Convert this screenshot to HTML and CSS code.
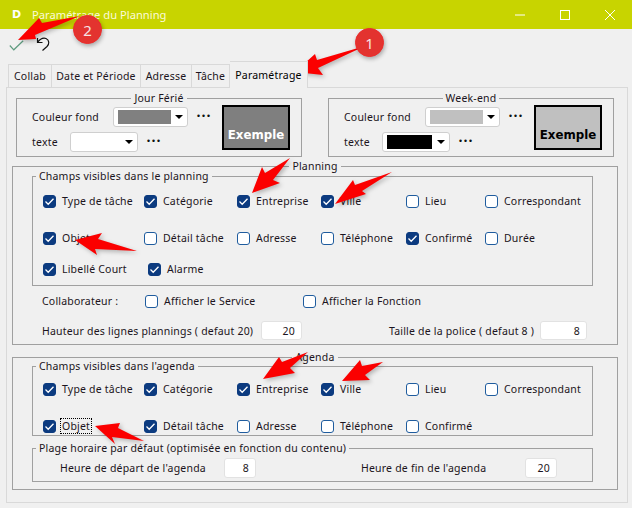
FILE: index.html
```html
<!DOCTYPE html>
<html lang="fr">
<head>
<meta charset="utf-8">
<title>Paramétrage du Planning</title>
<link rel="stylesheet" href="styles.css">
</head>
<body>
<div class="window">
  <header class="titlebar">
    <span class="app-logo">D</span>
    <span class="app-title">Paramétrage du Planning</span>
    <div class="win-controls">
      <span class="win-btn"><svg width="10" height="10" viewBox="0 0 10 10"><path d="M0 5h10" stroke="#fff" stroke-width="1"/></svg></span>
      <span class="win-btn"><svg width="10" height="10" viewBox="0 0 10 10"><rect x=".5" y=".5" width="9" height="9" fill="none" stroke="#fff"/></svg></span>
      <span class="win-btn"><svg width="10" height="10" viewBox="0 0 10 10"><path d="M0 0l10 10M10 0L0 10" stroke="#fff" stroke-width="1"/></svg></span>
    </div>
  </header>

  <div class="toolbar">
    <svg class="tool-check" width="15" height="11" viewBox="0 0 15 11"><path d="M.8 5.500l4 4.300L14.200.8" fill="none" stroke="#5f9c80" stroke-width="1.200"/></svg>
    <svg class="tool-undo" width="14" height="17" viewBox="0 0 14 17"><path d="M1.500 3v4.500h5M1.500 7.500C4 4 7 2.500 10 3.500c3.500 1.500 3.500 5.500 1 8L6.500 15.500" fill="none" stroke="#111" stroke-width="1.200"/></svg>
  </div>

  <nav class="tabs">
    <span class="tab tab-collab">Collab</span>
    <span class="tab tab-date">Date et Période</span>
    <span class="tab tab-adresse">Adresse</span>
    <span class="tab tab-tache">Tâche</span>
    <span class="tab tab-active">Paramétrage</span>
  </nav>

  <main class="panel">
    <div class="colors">
      <fieldset class="group color-group">
        <legend class="legend-center">Jour Férié</legend>
        <div class="color-body">
          <div class="color-form">
            <div class="color-row">
              <span class="lbl-fond">Couleur fond</span>
              <span class="select select-fond"><span class="swatch swatch-dark"></span><span class="caret"></span></span>
              <span class="dots">•••</span>
            </div>
            <div class="color-row">
              <span class="lbl-texte">texte</span>
              <span class="select select-texte"><span class="swatch swatch-white"></span><span class="caret"></span></span>
              <span class="dots">•••</span>
            </div>
          </div>
          <div class="sample sample-dark">Exemple</div>
        </div>
      </fieldset>
      <fieldset class="group color-group">
        <legend class="legend-center">Week-end</legend>
        <div class="color-body">
          <div class="color-form">
            <div class="color-row">
              <span class="lbl-fond">Couleur fond</span>
              <span class="select select-fond"><span class="swatch swatch-light"></span><span class="caret"></span></span>
              <span class="dots">•••</span>
            </div>
            <div class="color-row">
              <span class="lbl-texte">texte</span>
              <span class="select select-texte"><span class="swatch swatch-black"></span><span class="caret"></span></span>
              <span class="dots">•••</span>
            </div>
          </div>
          <div class="sample sample-light">Exemple</div>
        </div>
      </fieldset>
    </div>

    <fieldset class="group section section-planning">
      <legend class="legend-center legend-overlap">Planning</legend>
      <fieldset class="group fields">
        <legend class="legend-left">Champs visibles dans le planning</legend>
        <div class="check-grid check-grid-planning">
          <label class="check"><input type="checkbox" checked>Type de tâche</label>
          <label class="check"><input type="checkbox" checked>Catégorie</label>
          <label class="check"><input type="checkbox" checked>Entreprise</label>
          <label class="check"><input type="checkbox" checked>Ville</label>
          <label class="check"><input type="checkbox">Lieu</label>
          <label class="check"><input type="checkbox">Correspondant</label>
          <label class="check"><input type="checkbox" checked>Objet</label>
          <label class="check"><input type="checkbox">Détail tâche</label>
          <label class="check"><input type="checkbox">Adresse</label>
          <label class="check"><input type="checkbox">Téléphone</label>
          <label class="check"><input type="checkbox" checked>Confirmé</label>
          <label class="check"><input type="checkbox">Durée</label>
          <label class="check"><input type="checkbox" checked>Libellé Court</label>
          <label class="check check-shifted"><input type="checkbox" checked>Alarme</label>
        </div>
      </fieldset>
      <div class="collab-row">
        <span class="collab-label">Collaborateur :</span>
        <label class="check collab-service"><input type="checkbox">Afficher le Service</label>
        <label class="check"><input type="checkbox">Afficher la Fonction</label>
      </div>
      <div class="num-row">
        <span class="lbl-hauteur">Hauteur des lignes plannings ( defaut 20)</span>
        <input class="num num-hauteur" type="text" value="20">
        <span class="lbl-taille">Taille de la police ( defaut 8 )</span>
        <input class="num num-taille" type="text" value="8">
      </div>
    </fieldset>

    <fieldset class="group section section-agenda">
      <legend class="legend-center legend-overlap">Agenda</legend>
      <fieldset class="group fields fields-agenda">
        <legend class="legend-left">Champs visibles dans l'agenda</legend>
        <div class="check-grid check-grid-agenda">
          <label class="check"><input type="checkbox" checked>Type de tâche</label>
          <label class="check"><input type="checkbox" checked>Catégorie</label>
          <label class="check"><input type="checkbox" checked>Entreprise</label>
          <label class="check"><input type="checkbox" checked>Ville</label>
          <label class="check"><input type="checkbox">Lieu</label>
          <label class="check"><input type="checkbox">Correspondant</label>
          <label class="check"><input type="checkbox" checked><span class="focused">Objet</span></label>
          <label class="check"><input type="checkbox" checked>Détail tâche</label>
          <label class="check"><input type="checkbox">Adresse</label>
          <label class="check"><input type="checkbox">Téléphone</label>
          <label class="check"><input type="checkbox">Confirmé</label>
        </div>
      </fieldset>
      <fieldset class="group hours">
        <legend class="legend-left">Plage horaire par défaut (optimisée en fonction du contenu)</legend>
        <div class="hours-row">
          <span class="lbl-hour">Heure de départ de l'agenda</span>
          <input class="num num-hour" type="text" value="8">
          <span class="lbl-hour lbl-hour-end">Heure de fin de l'agenda</span>
          <input class="num num-hour" type="text" value="20">
        </div>
      </fieldset>
    </fieldset>
  </main>
</div>

<svg class="arrows" width="632" height="508" viewBox="0 0 632 508">
  <polygon points="80,16 42,23 39,18 18,40 36,39 35,35"/>
  <polygon points="365,46 317,60 315,54 295,72 323,75 318,68"/>
  <polygon points="290,158 265,173 262,167 252,193 280,183 273,180"/>
  <polygon points="392,172 355,185 353,180 335,204 366,194 362,191"/>
  <polygon points="137,251 98,239 102,233 75,240 97,255 95,249"/>
  <polygon points="308,352 282,362 279,357 263,379 295,373 290,368"/>
  <polygon points="383,362 362,366 360,360 342,381 370,380 365,375"/>
  <polygon points="144,441 118,428 120,423 95,426 115,444 112,437"/>
</svg>
<div class="badge badge-one">1</div>
<div class="badge badge-two">2</div>
</body>
</html>
```

FILE: styles.css
```css
* { box-sizing: border-box; }
html, body { margin: 0; padding: 0; height: 100%; overflow: hidden; }
body {
  position: relative;
  background: #f0f0f0;
  color: #1b1420;
  font: 10.5px/14px "Noto Sans", sans-serif;
  letter-spacing: .2px;
}
.window { width: 632px; height: 508px; }

.titlebar {
  display: flex;
  align-items: center;
  height: 29px;
  background: #c8d400;
  color: #fff;
  letter-spacing: 0;
}
.app-logo { width: 32px; padding-left: 12px; font: bold 11px "DejaVu Sans", sans-serif; }
.app-title { font: 11.200px "Noto Sans", sans-serif; color: #fbfbd8; }
.win-controls { display: flex; margin-left: auto; }
.win-btn { display: flex; align-items: center; justify-content: center; width: 45px; height: 29px; }

.toolbar { display: flex; height: 32px; padding-left: 9px; align-items: flex-start; }
.tool-check { margin-top: 11px; }
.tool-undo { margin: 6px 0 0 12px; }

.tabs { display: flex; align-items: flex-end; height: 26px; padding-left: 8px; position: relative; z-index: 1; }
.tab {
  display: flex;
  align-items: center;
  justify-content: center;
  height: 23px;
  border: 1px solid #d9d9d9;
  border-bottom: 0;
  border-left-width: 0;
  background: #f0f0f0;
}
.tab-collab { width: 44px; border-left-width: 1px; }
.tab-date { width: 89px; }
.tab-adresse { width: 51px; }
.tab-tache { width: 38px; }
.tab-active {
  width: 78px;
  height: 27px;
  margin-bottom: -1px;
  color: #000;
  border-left-width: 0;
}

.panel {
  width: 622px;
  height: 416px;
  margin-left: 6px;
  padding: 3px 9px 0 5px;
  border: 1px solid #d9d9d9;
}

.group { margin: 0; padding: 0; min-width: 0; border: 1px solid #a0a0a0; }
.legend-center { margin: 0 auto; padding: 0 3px; line-height: 14px; }
.legend-left { margin-left: 3px; padding: 0 3px; line-height: 14px; }
.legend-overlap { margin-bottom: -6px; }

.colors { display: flex; gap: 26px; margin-left: 4px; }
.color-group { width: 286px; }
.color-body { display: flex; padding: 2px 0 4px 15px; }
.color-form { display: flex; flex-direction: column; gap: 5px; }
.color-row { display: flex; align-items: center; height: 20px; }
.lbl-fond { width: 81px; }
.lbl-texte { width: 38px; }
.select {
  display: flex;
  align-items: center;
  height: 20px;
  padding-left: 4px;
  background: #fff;
  border: 1px solid #cfcfcf;
  border-radius: 3px;
}
.select-fond { width: 75px; }
.select-texte { width: 68px; }
.swatch { display: block; height: 14px; }
.select-fond .swatch { width: 53px; }
.select-texte .swatch { width: 45px; }
.swatch-dark { background: #808080; }
.swatch-light { background: #c0c0c0; }
.swatch-white { background: #fff; }
.swatch-black { background: #000; }
.caret {
  margin-left: 4px;
  border-left: 4px solid transparent;
  border-right: 4px solid transparent;
  border-top: 4px solid #000;
}
.select-texte .caret { margin-left: 5px; }
.dots { margin: -3px 0 0 8px; font: 8.500px/14px "DejaVu Sans", sans-serif; letter-spacing: 0; color: #111; }
.sample {
  display: flex;
  align-items: flex-end;
  justify-content: center;
  width: 68px;
  height: 45px;
  margin: -2px 11px 0 auto;
  padding-bottom: 5px;
  border: 2px solid #000;
  font: bold 11.800px/16px "DejaVu Sans", sans-serif;
  letter-spacing: 0;
}
.sample-dark { background: #7f7f7f; color: #fff; }
.sample-light { background: #c0c0c0; color: #000; }

.section { width: 606px; padding: 0 0 4px; }
.section > :not(legend) { margin-left: 19px; margin-right: 24px; }
.section-planning { margin-top: 2px; }
.section-agenda { margin-top: 5px; padding-bottom: 7px; }
.fields { margin-top: 2px; }
.fields-agenda { margin-top: 1px; }

.check-grid {
  display: grid;
  grid-template-columns: 101px 93px 84px 85px 79px auto;
  align-items: start;
  padding-left: 10px;
}
.check-grid-planning { grid-template-rows: 37px 31px 14px; padding-top: 11px; padding-bottom: 9px; }
.check-grid-agenda { grid-template-rows: 37px 14px; padding-top: 9px; padding-bottom: 2px; }

.check { display: flex; align-items: center; height: 14px; white-space: nowrap; }
.check input {
  appearance: none;
  flex: none;
  width: 13px;
  height: 13px;
  margin: 0 6px 0 0;
  background: #fff;
  border: 1.500px solid #1f5c9e;
  border-radius: 3px;
}
.check input:checked {
  border-color: #0c3b80;
  background: #0c3b80 url("data:image/svg+xml,%3Csvg xmlns='http://www.w3.org/2000/svg' viewBox='0 0 13 13'%3E%3Cpath d='M2.500 6.500l2.700 2.700 5.300-5.500' fill='none' stroke='white' stroke-width='1.300'/%3E%3C/svg%3E") center / 13px 13px no-repeat;
}
.check-shifted { margin-left: 4px; }
.focused { outline: 1px dotted #000; outline-offset: 0; padding: 0 1px; margin-left: -1px; }

.collab-row { display: flex; align-items: center; height: 18px; margin-top: 6px; padding-left: 10px; }
.collab-label { width: 103px; }
.collab-service { width: 158px; }

.num-row { display: flex; align-items: center; height: 19px; margin-top: 11px; padding-left: 10px; }
.lbl-hauteur { width: 219px; white-space: nowrap; }
.lbl-taille { width: 151px; margin-left: 87px; white-space: nowrap; }
.num {
  height: 19px;
  padding: 0 6px 0 0;
  text-align: right;
  background: #fff;
  border: 1px solid #e2e2e2;
  border-radius: 3px;
  color: #1b1420;
  font: inherit;
  letter-spacing: inherit;
}
.num-hauteur { width: 41px; }
.num-taille { width: 47px; }

.hours { margin-top: 5px; padding: 3px 0; }
.section > .hours { margin-top: 5px; }
.hours-row { display: flex; align-items: center; padding-left: 27px; }
.lbl-hour { width: 164px; white-space: nowrap; }
.lbl-hour-end { margin-left: 105px; }
.num-hour { width: 32px; height: 20px; }

.arrows {
  position: absolute;
  left: 0;
  top: 0;
  fill: #fb0000;
  filter: drop-shadow(2px 2px 2px rgba(0, 0, 0, .25));
  pointer-events: none;
}
.badge {
  position: absolute;
  display: flex;
  align-items: center;
  justify-content: center;
  width: 29px;
  height: 29px;
  border-radius: 50%;
  background: #e3332f;
  border: 1px solid #ee2a2a;
  box-shadow: 1px 2px 4px rgba(0, 0, 0, .3);
  color: #f6e3e3;
  font: 15px "Noto Sans", sans-serif;
  letter-spacing: 0;
}
.badge-one { left: 355px; top: 28px; }
.badge-two { left: 73px; top: 15px; }
```
